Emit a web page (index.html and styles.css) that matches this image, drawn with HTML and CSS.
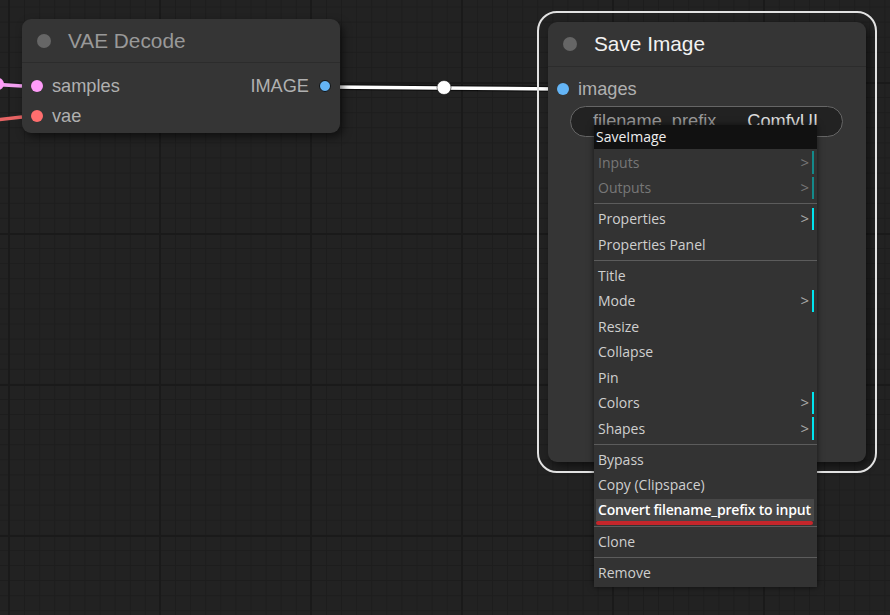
FILE: index.html
```html
<!DOCTYPE html>
<html lang="en">
<head>
  <meta charset="UTF-8">
  <title>ComfyUI - Node Menu</title>
  <link rel="stylesheet" href="styles.css">
</head>
<body>
  <div class="canvas">
    <!-- Links between nodes -->
    <svg class="links" width="890" height="615" viewBox="0 0 890 615">
      <path d="M-10 84 L22 86" stroke="#f3a0f1" stroke-width="3.5" fill="none"/>
      <circle cx="-2" cy="84" r="6" fill="#ff9cf9"/>
      <path d="M-4 120 L22 117" stroke="#e86464" stroke-width="3.5" fill="none"/>
      <path d="M331 87 C 400 87, 490 89, 557 89" stroke="rgba(0,0,0,0.55)" stroke-width="6" fill="none"/>
      <path d="M331 87 C 400 87, 490 89, 557 89" stroke="#ffffff" stroke-width="3.5" fill="none"/>
      <circle cx="444" cy="87.5" r="7" fill="#ffffff" stroke="rgba(0,0,0,0.5)" stroke-width="1"/>
    </svg>

    <!-- VAE Decode -->
    <div class="node node-vae">
      <div class="node-title">
        <span class="title-dot"></span>
        <span class="title-text">VAE Decode</span>
      </div>
      <div class="node-body">
        <div class="slot-row">
          <div class="slot-in"><span class="dot dot-latent"></span>samples</div>
          <div class="slot-out">IMAGE<span class="dot dot-image outlined"></span></div>
        </div>
        <div class="slot-row">
          <div class="slot-in"><span class="dot dot-vae"></span>vae</div>
        </div>
      </div>
    </div>

    <!-- Save Image (selected) -->
    <div class="node node-save selected">
      <div class="node-title">
        <span class="title-dot"></span>
        <span class="title-text">Save Image</span>
      </div>
      <div class="node-body">
        <div class="slot-row">
          <div class="slot-in"><span class="dot dot-image"></span>images</div>
        </div>
        <div class="widget">
          <span class="widget-name">filename_prefix</span>
          <span class="widget-value">ComfyUI</span>
        </div>
      </div>
    </div>

    <!-- Context menu -->
    <div class="context-menu">
      <div class="menu-title">SaveImage</div>
      <div class="entry disabled submenu"><span>Inputs</span><span class="arrow">&gt;</span></div>
      <div class="entry disabled submenu"><span>Outputs</span><span class="arrow">&gt;</span></div>
      <div class="separator"></div>
      <div class="entry submenu"><span>Properties</span><span class="arrow">&gt;</span></div>
      <div class="entry"><span>Properties Panel</span></div>
      <div class="separator"></div>
      <div class="entry"><span>Title</span></div>
      <div class="entry submenu"><span>Mode</span><span class="arrow">&gt;</span></div>
      <div class="entry"><span>Resize</span></div>
      <div class="entry"><span>Collapse</span></div>
      <div class="entry"><span>Pin</span></div>
      <div class="entry submenu"><span>Colors</span><span class="arrow">&gt;</span></div>
      <div class="entry submenu"><span>Shapes</span><span class="arrow">&gt;</span></div>
      <div class="separator"></div>
      <div class="entry"><span>Bypass</span></div>
      <div class="entry"><span>Copy (Clipspace)</span></div>
      <div class="entry active"><span>Convert filename_prefix to input</span></div>
      <div class="separator"></div>
      <div class="entry"><span>Clone</span></div>
      <div class="separator"></div>
      <div class="entry"><span>Remove</span></div>
    </div>
  </div>
</body>
</html>
```

FILE: styles.css
```css
* {
  margin: 0;
  padding: 0;
  box-sizing: border-box;
}

body {
  width: 890px;
  height: 615px;
  overflow: hidden;
  background: #222;
  font-family: 'Liberation Sans', Arial, sans-serif;
}

/* Canvas with grid */
.canvas {
  position: relative;
  width: 890px;
  height: 615px;
  overflow: hidden;
  background-color: #222222;
  background-image:
    linear-gradient(90deg, #1a1a1a 2px, transparent 2px),
    linear-gradient(#1a1a1a 2px, transparent 2px),
    linear-gradient(90deg, #1d1d1d 1px, transparent 1px),
    linear-gradient(#1d1d1d 1px, transparent 1px);
  background-size: 151px 151px, 151px 151px, 15.1px 15.1px, 15.1px 15.1px;
  background-position: 8px 82px, 8px 82px, 9px 82px, 9px 82px;
}

.links {
  position: absolute;
  top: 0;
  left: 0;
  overflow: visible;
}

/* Nodes */
.node {
  position: absolute;
  background: #353535;
  border-radius: 9px;
  box-shadow: 3px 4px 8px rgba(0, 0, 0, 0.55);
}

.node-vae {
  left: 22px;
  top: 19px;
  width: 318px;
  height: 114px;
}

.node-save {
  left: 548px;
  top: 22px;
  width: 318px;
  height: 440px;
}

.node.selected {
  outline: 2px solid #e2e2e2;
  outline-offset: 9px;
}

.node-title {
  height: 44px;
  display: flex;
  align-items: center;
  padding-left: 15px;
  border-bottom: 1px solid #2c2c2c;
}

.node-save .node-title {
  height: 45px;
}

.title-dot {
  width: 14px;
  height: 14px;
  border-radius: 50%;
  background: #666;
  margin-right: 17px;
}

.title-text {
  font-size: 20.8px;
  color: #999;
}

.node-save .title-text {
  color: #f2f2f2;
}

.node-body {
  padding-top: 8px;
}

.node-save .node-body {
  padding-top: 7px;
}

.slot-row {
  height: 30px;
  display: flex;
  align-items: center;
  justify-content: space-between;
  font-size: 18.2px;
  color: #b0b0b0;
}

.slot-in {
  display: flex;
  align-items: center;
  padding-left: 9px;
}

.slot-in .dot {
  margin-right: 9px;
}

.slot-out {
  display: flex;
  align-items: center;
  padding-right: 9px;
}

.slot-out .dot {
  margin-left: 10px;
}

.dot {
  width: 12px;
  height: 12px;
  border-radius: 50%;
}

.dot-latent { background: #ff9cf9; }
.dot-vae { background: #ff6e6e; }
.dot-image { background: #64b5f6; }

.dot.outlined {
  border: 1.5px solid #111;
}

/* Widget */
.widget {
  margin: 2px 23px 0 22px;
  height: 31px;
  border: 1px solid #666;
  border-radius: 16px;
  background: #222;
  display: flex;
  align-items: center;
  justify-content: space-between;
  padding: 0 24px 0 22px;
  font-size: 18.2px;
}

.widget-name { color: #999; }
.widget-value { color: #ddd; }

/* Context menu */
.context-menu {
  position: absolute;
  left: 594px;
  top: 125px;
  width: 223px;
  display: flex;
  flex-direction: column;
  background: #333;
  padding-bottom: 2px;
  box-shadow: 0 0 6px rgba(0, 0, 0, 0.6);
  font-family: 'Open Sans', sans-serif;
  font-size: 14px;
  color: #cfcfcf;
}

.menu-title {
  height: 24px;
  line-height: 23px;
  background: #111;
  color: #eee;
  padding-left: 2px;
  margin-bottom: 0.5px;
}

.entry {
  height: 25.5px;
  line-height: 25.5px;
  padding-left: 4px;
  display: flex;
  justify-content: space-between;
  align-items: center;
  white-space: nowrap;
  flex-shrink: 0;
}

.entry.disabled {
  color: #777;
}

.entry.submenu {
  padding-right: 8px;
  position: relative;
}

.entry.submenu::after {
  content: "";
  position: absolute;
  right: 3px;
  top: 1.5px;
  width: 2.5px;
  height: 22.5px;
  background: #00e5f0;
}

.entry.disabled.submenu::after {
  background: #14898a;
}

.arrow {
  color: #aaa;
  font-size: 15px;
}

.entry.disabled .arrow {
  color: #777;
}

.entry.active {
  margin: 1.5px 3px 2px 2px;
  padding-left: 2px;
  height: 22px;
  line-height: 22px;
  background: #474747;
  color: #fff;
  font-weight: 600;
  letter-spacing: -0.2px;
  position: relative;
}

/* red underline annotation */
.entry.active::after {
  content: "";
  position: absolute;
  left: 0;
  right: 1px;
  bottom: -3.5px;
  height: 3.5px;
  border-radius: 2px;
  background: #c4262b;
}

.separator {
  height: 1px;
  margin: 2.5px 0 2px;
  background: #5c5c5c;
  flex-shrink: 0;
}
```
